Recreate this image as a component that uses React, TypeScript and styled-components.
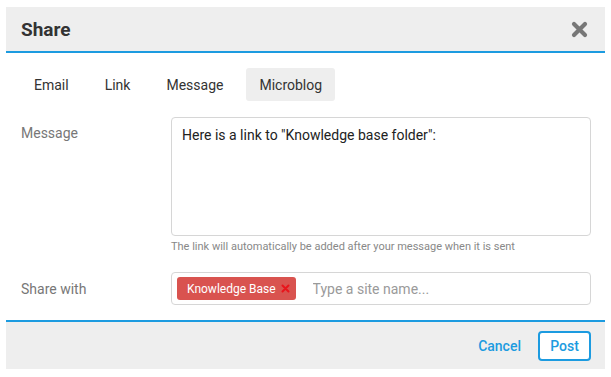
import React from "react";
import styled, { createGlobalStyle } from "styled-components";

const GlobalStyle = createGlobalStyle`
  html, body {
    margin: 0;
    padding: 0;
    background: #ffffff;
    font-family: Roboto, "Liberation Sans", sans-serif;
  }
`;

const BLUE = "#1c9be0";

const Page = styled.div`
  padding: 7px 0 0 6px;
`;

const Dialog = styled.div`
  width: 599px;
  background: #ffffff;
  border-radius: 2px;
`;

const Header = styled.div`
  height: 44px;
  display: flex;
  align-items: center;
  justify-content: space-between;
  padding: 0 17px 0 15px;
  background: #eeeeee;
  border-bottom: 2px solid ${BLUE};
`;

const Title = styled.h1`
  margin: 0;
  font-size: 19px;
  font-weight: 700;
  color: #333333;
`;

const CloseButton = styled.button`
  border: 0;
  background: none;
  padding: 0;
  width: 18px;
  height: 18px;
  display: flex;
  align-items: center;
  justify-content: center;
  cursor: pointer;
`;

const Body = styled.div`
  padding: 15px 14px 15px 15px;
  display: flex;
  flex-direction: column;
`;

const Tabs = styled.div`
  display: flex;
  gap: 10px;
  margin-bottom: 16px;
`;

const Tab = styled.button<{ $active?: boolean }>`
  height: 33px;
  padding: 0 13px;
  border: 0;
  border-radius: 3px;
  background: ${(p) => (p.$active ? "#eeeeee" : "transparent")};
  font-family: Roboto, "Liberation Sans", sans-serif;
  font-size: 14px;
  color: #333333;
  cursor: pointer;
`;

const Row = styled.div<{ $center?: boolean; $gap?: number }>`
  display: flex;
  align-items: ${(p) => (p.$center ? "center" : "flex-start")};
  margin-top: ${(p) => p.$gap ?? 0}px;
`;

const Label = styled.div<{ $top?: number }>`
  width: 150px;
  flex-shrink: 0;
  padding-top: ${(p) => p.$top ?? 0}px;
  font-size: 14px;
  color: #777777;
`;

const Field = styled.div`
  flex: 1;
  display: flex;
  flex-direction: column;
`;

const TextArea = styled.textarea`
  box-sizing: border-box;
  width: 100%;
  height: 119px;
  margin: 0;
  padding: 8px 10px;
  border: 1px solid #d6d6d6;
  border-radius: 4px;
  resize: none;
  font-family: Roboto, "Liberation Sans", sans-serif;
  font-size: 14px;
  line-height: 18px;
  color: #222222;
  outline: none;
`;

const Hint = styled.div`
  margin-top: 4px;
  font-size: 11px;
  color: #888888;
  line-height: 14px;
`;

const TagBox = styled.div`
  box-sizing: border-box;
  height: 33px;
  display: flex;
  align-items: center;
  gap: 17px;
  padding: 0 5px;
  border: 1px solid #d6d6d6;
  border-radius: 4px;
`;

const Chip = styled.span`
  height: 23px;
  display: inline-flex;
  align-items: center;
  gap: 5px;
  padding: 0 6px 0 10px;
  background: #d9534f;
  border-radius: 3px;
  color: #ffffff;
  font-size: 12px;
`;

const ChipRemove = styled.span`
  display: inline-flex;
  align-items: center;
`;

const SiteInput = styled.input`
  flex: 1;
  border: 0;
  outline: none;
  padding: 0;
  font-family: Roboto, "Liberation Sans", sans-serif;
  font-size: 14px;
  color: #333333;
  &::placeholder {
    color: #9a9a9a;
  }
`;

const Footer = styled.div`
  height: 47px;
  display: flex;
  align-items: center;
  justify-content: flex-end;
  gap: 17px;
  padding: 0 14px 0 0;
  background: #eeeeee;
  border-top: 2px solid ${BLUE};
`;

const LinkButton = styled.button`
  border: 0;
  background: none;
  padding: 0;
  font-family: Roboto, "Liberation Sans", sans-serif;
  font-size: 14px;
  font-weight: 500;
  color: ${BLUE};
  cursor: pointer;
`;

const PrimaryButton = styled.button`
  box-sizing: border-box;
  width: 53px;
  height: 30px;
  border: 2px solid ${BLUE};
  border-radius: 4px;
  background: #ffffff;
  font-family: Roboto, "Liberation Sans", sans-serif;
  font-size: 14px;
  font-weight: 500;
  color: ${BLUE};
  cursor: pointer;
`;

const tabs = ["Email", "Link", "Message", "Microblog"];

export default function App() {
  const [active, setActive] = React.useState("Microblog");

  return (
    <Page>
      <GlobalStyle />
      <Dialog>
        <Header>
          <Title>Share</Title>
          <CloseButton aria-label="Close">
            <svg width="17" height="17" viewBox="0 0 17 17">
              <path
                d="M3 3 L14 14 M14 3 L3 14"
                stroke="#777777"
                strokeWidth="4.2"
                strokeLinecap="round"
              />
            </svg>
          </CloseButton>
        </Header>
        <Body>
          <Tabs>
            {tabs.map((t) => (
              <Tab key={t} $active={t === active} onClick={() => setActive(t)}>
                {t}
              </Tab>
            ))}
          </Tabs>
          <Row>
            <Label $top={8}>Message</Label>
            <Field>
              <TextArea defaultValue={'Here is a link to "Knowledge base folder":'} />
              <Hint>The link will automatically be added after your message when it is sent</Hint>
            </Field>
          </Row>
          <Row $center $gap={18}>
            <Label>Share with</Label>
            <Field>
              <TagBox>
                <Chip>
                  Knowledge Base
                  <ChipRemove>
                    <svg width="9" height="9" viewBox="0 0 9 9">
                      <path
                        d="M1.5 1.5 L7.5 7.5 M7.5 1.5 L1.5 7.5"
                        stroke="#e8141b"
                        strokeWidth="2"
                        strokeLinecap="round"
                      />
                    </svg>
                  </ChipRemove>
                </Chip>
                <SiteInput placeholder="Type a site name..." />
              </TagBox>
            </Field>
          </Row>
        </Body>
        <Footer>
          <LinkButton>Cancel</LinkButton>
          <PrimaryButton>Post</PrimaryButton>
        </Footer>
      </Dialog>
    </Page>
  );
}
